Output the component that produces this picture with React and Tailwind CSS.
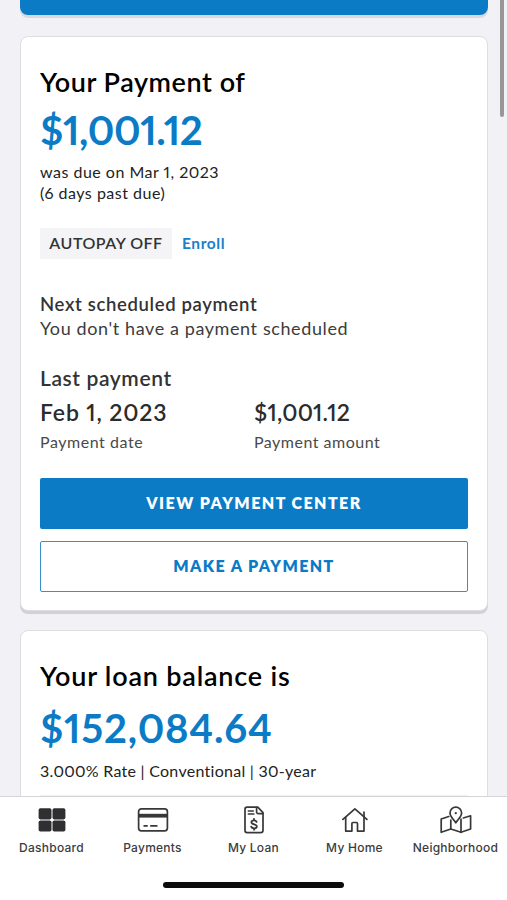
import React from 'react';

const DashboardIcon = () => (
  <svg width="28" height="24" viewBox="0 0 28 24" fill="#2f2f31">
    <rect x="0.6" y="0.2" width="12.9" height="11.2" rx="1.8" />
    <rect x="14.5" y="0.2" width="12.9" height="11.2" rx="1.8" />
    <rect x="0.6" y="12.4" width="12.9" height="11.2" rx="1.8" />
    <rect x="14.5" y="12.4" width="12.9" height="11.2" rx="1.8" />
  </svg>
);

const PaymentsIcon = () => (
  <svg width="32" height="24" viewBox="0 0 32 24" fill="none" stroke="#38383a" strokeWidth="1.7">
    <rect x="1.6" y="0.9" width="28.8" height="22" rx="2.8" />
    <path d="M1.6 7.7h28.8" strokeWidth="3.8" />
    <path d="M6.5 17.8h4.2M13.2 17.8h7.3" strokeWidth="1.8" />
  </svg>
);

const LoanIcon = () => (
  <svg width="20" height="28" viewBox="0 0 20 28" fill="none" stroke="#38383a" strokeWidth="1.7" strokeLinejoin="round" strokeLinecap="round">
    <path d="M3 1.2h10.800l5.200 5.400v17.600a2.400 2.400 0 0 1-2.400 2.400H3a2 2 0 0 1-2-2V3.200a2 2 0 0 1 2-2z" />
    <path d="M12.600 1.600v4.400a1.700 1.700 0 0 0 1.700 1.700h4.500" />
    <path d="M4.300 4.900h5M4.300 8.100h5.600" strokeWidth="1.500" />
    <path d="M12.600 15.900c-.4-1-1.400-1.500-2.600-1.500-1.500 0-2.600.7-2.600 1.900 0 2.800 5.400 1.200 5.400 4.100 0 1.200-1.200 1.900-2.700 1.900-1.400 0-2.500-.6-2.900-1.700M10 12.800v1.600M10 22.300v1.500" strokeWidth="1.800" />
  </svg>
);

const HomeIcon = () => (
  <svg width="26" height="26" viewBox="0 0 26 26" fill="none" stroke="#38383a" strokeWidth="1.7" strokeLinejoin="round" strokeLinecap="round">
    <path d="M0.900 12.400L12.900 1.900l12 10.500" />
    <path d="M22 9.600V5" />
    <path d="M3.700 10.400v13.700h6.200v-7.600a1 1 0 0 1 1-1h3.600a1 1 0 0 1 1 1v7.600H22V10.400" />
  </svg>
);

const NeighborhoodIcon = () => (
  <svg width="32" height="28" viewBox="0 0 32 28" fill="none" stroke="#38383a" strokeWidth="1.7" strokeLinejoin="round" strokeLinecap="round">
    <path d="M15.800 16.800c-1.700-3-5.800-6-5.800-9.800a5.800 5.800 0 0 1 11.600 0c0 3.800-4.100 6.800-5.800 9.800z" />
    <circle cx="15.800" cy="7.200" r="1.100" fill="#38383a" stroke="none" />
    <path d="M8.800 10.500L1.200 13v13.300l9.600-3.300 10.200 3.300 9.600-3.300V9.800L23.300 12" />
    <path d="M10.800 14V23M21 13.200v13.100" />
  </svg>
);

const tabs = [
  { label: 'Dashboard', Icon: DashboardIcon },
  { label: 'Payments', Icon: PaymentsIcon },
  { label: 'My Loan', Icon: LoanIcon },
  { label: 'My Home', Icon: HomeIcon },
  { label: 'Neighborhood', Icon: NeighborhoodIcon },
];

const PaymentCard = () => (
  <section className="mt-[18px] h-[575px] shrink-0 rounded-lg border border-[#dddde2] bg-white px-[19px] pt-[29px] shadow-[0_3px_0_#d2d2d6]">
    <h2 className="text-[27px] leading-8 font-semibold tracking-[0.55px] text-black">Your Payment of</h2>
    <p className="mt-2 text-[40px] leading-[48px] font-bold tracking-[-0.4px] proportional-nums text-[#0b7bc6]">$1,001.12</p>
    <p className="mt-[7px] text-base leading-[21px] tracking-[0.5px] proportional-nums text-[#222]">
      was due on Mar 1, 2023
      <br />
      (6 days past due)
    </p>
    <div className="mt-[25px] flex h-[31px] items-center gap-[10px]">
      <span className="flex h-full w-[132px] items-center justify-center bg-[#f4f4f6] pb-px text-base font-semibold tracking-[0.5px] text-[#333]">
        AUTOPAY OFF
      </span>
      <a className="text-[15.5px] font-bold tracking-[0.6px] text-[#1b80ca]">Enroll</a>
    </div>
    <h3 className="mt-[33px] text-[18.5px] leading-6 font-semibold tracking-[0.65px] text-[#333]">Next scheduled payment</h3>
    <p className="text-lg leading-6 tracking-[0.6px] text-[#3c3c3c]">You don't have a payment scheduled</p>
    <h3 className="mt-[25px] text-[21px] leading-[26px] font-semibold tracking-[0.6px] text-[#333]">Last payment</h3>
    <div className="mt-[7px] grid grid-cols-2">
      <div>
        <p className="text-[23px] leading-7 font-semibold tracking-[0.85px] proportional-nums text-[#2c2c2c]">Feb 1, 2023</p>
        <p className="mt-[6px] text-base leading-5 tracking-[0.55px] text-[#4a4a4a]">Payment date</p>
      </div>
      <div>
        <p className="text-[23px] leading-7 font-semibold tracking-[0.2px] proportional-nums text-[#2c2c2c]">$1,001.12</p>
        <p className="mt-[6px] text-base leading-5 tracking-[0.5px] text-[#4a4a4a]">Payment amount</p>
      </div>
    </div>
    <button className="mt-[26px] block h-[51px] w-full rounded-[2px] bg-[#0b7bc6] pb-px text-base font-extrabold tracking-[1.45px] text-white">
      VIEW PAYMENT CENTER
    </button>
    <button className="mt-3 block h-[51px] w-full rounded-[2px] border border-[#3a8fcb] bg-white pb-px text-base font-extrabold tracking-[1.4px] text-[#0b7bc6]">
      MAKE A PAYMENT
    </button>
  </section>
);

const LoanCard = () => (
  <section className="mt-[19px] h-[300px] shrink-0 rounded-lg border border-[#dddde2] bg-white px-[19px] pt-[29px]">
    <h2 className="text-[27px] leading-8 font-semibold tracking-[0.8px] text-black">Your loan balance is</h2>
    <p className="mt-3 text-[40px] leading-[48px] font-bold tracking-[0.75px] proportional-nums text-[#0b7bc6]">$152,084.64</p>
    <p className="mt-2 text-base leading-[21px] tracking-[0.27px] proportional-nums text-[#222]">3.000% Rate | Conventional | 30-year</p>
    <hr className="mt-[14px] border-[#f1f1f3]" />
  </section>
);

export default function App() {
  return (
    <div className="relative flex h-[900px] w-[507px] flex-col overflow-hidden bg-[#f2f2f6] font-['Lato',sans-serif]">
      <main className="flex h-[796px] flex-col overflow-hidden pr-[19px] pl-5">
        <div className="h-[15px] shrink-0 rounded-b-lg bg-[#0b7bc6] shadow-[0_3px_0_#d9d9e0]" />
        <div className="h-[3px] shrink-0" />
        <PaymentCard />
        <LoanCard />
      </main>

      {/* scroll indicator */}
      <div className="absolute top-0 right-[3px] h-[117px] w-1 rounded-b-full bg-[#97979a]" />

      <nav className="flex h-[104px] flex-col items-center border-t border-[#d5d5d9] bg-white">
        <div className="grid w-[505px] grid-cols-5 pt-2">
          {tabs.map(({ label, Icon }) => (
            <div key={label} className="flex flex-col items-center">
              <div className="flex h-[30px] items-center">
                <Icon />
              </div>
              <span className="mt-[5px] font-['Inter',sans-serif] text-xs leading-4 font-medium tracking-[0.25px] text-[#3c3c3e]">
                {label}
              </span>
            </div>
          ))}
        </div>
        <div className="mt-[26px] h-[6px] w-[181px] rounded-full bg-[#0c0c0c]" />
      </nav>
    </div>
  );
}
